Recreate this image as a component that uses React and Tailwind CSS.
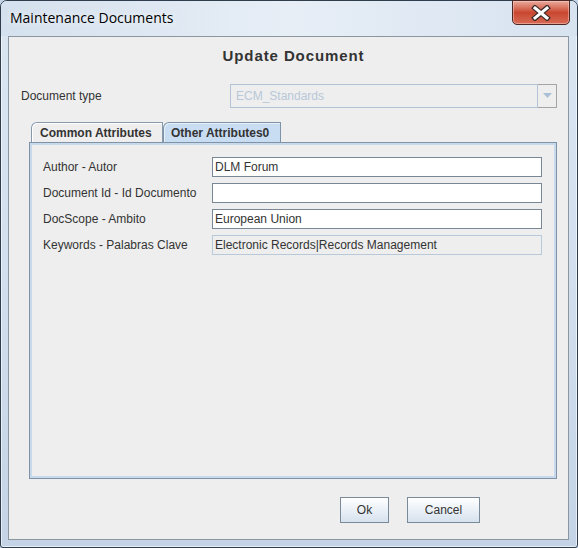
import React from 'react'

const ui = { fontFamily: '"Liberation Sans", Arial, sans-serif' }

function CloseButton() {
  return (
    <div className="-mt-px w-[58px] h-[25px] rounded-b-[5px] border border-[#4b2823] bg-linear-to-b from-[#e9a99d] via-[#c9462f] to-[#d76a55] flex items-center justify-center shadow-[inset_0_0_0_1px_rgba(255,220,210,0.45)]">
      <svg width="20" height="16" viewBox="0 0 20 16">
        <path d="M4 3 L16 13 M16 3 L4 13" stroke="#3b2a28" strokeWidth="5.5" strokeLinecap="square" />
        <path d="M4 3 L16 13 M16 3 L4 13" stroke="#ffffff" strokeWidth="3" strokeLinecap="square" />
      </svg>
    </div>
  )
}

function Field({ value, readOnly }) {
  return (
    <div
      className={
        readOnly
          ? 'h-[20px] border border-[#b8c9da] bg-[#eeeeee] px-[2px] flex items-center text-[12px] text-[#333333]'
          : 'h-[20px] border border-[#7a8896] bg-white px-[2px] flex items-center text-[12px] text-[#333333]'
      }
    >
      {value}
    </div>
  )
}

function Row({ label, value, readOnly }) {
  return (
    <div className="flex items-center h-[20px]">
      <div className="w-[169px] text-[12px] text-[#333333] pl-[13px] box-content">{label}</div>
      <div className="w-[330px]">
        <Field value={value} readOnly={readOnly} />
      </div>
    </div>
  )
}

export default function App() {
  return (
    <div className="w-[578px] h-[548px] bg-[#c5d5e7]" style={ui}>
      <div className="h-full flex flex-col border border-[#2f3d4c] rounded-t-[7px] rounded-b-[3px] bg-linear-to-b from-[#dbe6f2] via-[#d2dfee] to-[#c4d4e6] shadow-[inset_0_0_0_1px_rgba(255,255,255,0.6)]">
        {/* title bar */}
        <div className="h-[35px] flex items-start justify-between bg-linear-to-r from-[#d5e1ee] via-[#e7eef6] to-[#d8e3f0] rounded-t-[6px]">
          <div
            className="pl-[9px] pt-[8px] text-[14px] leading-[18px] text-black"
            style={{ fontFamily: '"Open Sans", "Noto Sans", sans-serif', textShadow: '0 0 6px rgba(255,255,255,0.9)' }}
          >
            Maintenance Documents
          </div>
          <div className="mr-[7px]">
            <CloseButton />
          </div>
        </div>

        {/* client area */}
        <div className="ml-[7px] mr-[8px] mb-[7px] flex-1 border border-[#8b96a1] bg-[#eeeeee] flex flex-col">
          <div className="mt-[10px] h-[18px] leading-[18px] pl-[10px] text-center text-[15px] font-bold text-[#333333] tracking-[0.9px]">
            Update Document
          </div>

          <div className="mt-[19px] h-[24px] flex items-center pl-[12px] pr-[11px]">
            <div className="text-[12px] text-[#333333]">Document type</div>
            <div className="ml-auto w-[327px] h-[24px] flex">
              <div className="flex-1 border border-[#b3c4d6] flex items-center pl-[5px] text-[12px] text-[#b8c8d8]">
                ECM_Standards
              </div>
              <div className="w-[19px] border border-l-0 border-[#a4a4a4] flex items-center justify-center">
                <svg width="9" height="6" viewBox="0 0 9 6">
                  <path d="M0 0 H9 L4.5 5 Z" fill="#aac0d6" />
                </svg>
              </div>
            </div>
          </div>

          {/* tabs */}
          <div className="mt-[14px] ml-[20px] mr-[11px] flex flex-col">
            <div className="h-[20px] flex items-end pl-[2px]">
              <div className="h-[20px] w-[132px] border border-b-0 border-[#8799ab] rounded-tl-[6px] bg-[#eeeeee] shadow-[inset_1px_1px_0_#ffffff] flex items-center pl-[8px] text-[12px] font-bold text-[#333333]">
                Common Attributes
              </div>
              <div className="h-[20px] w-[118px] border border-b-0 border-[#7f93a8] rounded-tl-[6px] bg-[#c8ddf2] shadow-[inset_1px_1px_0_#e6f0fa] flex items-center pl-[7px] text-[12px] font-bold text-[#333333]">
                Other Attributes0
              </div>
            </div>
            <div className="h-[337px] border border-[#7f93a8] shadow-[inset_0_0_0_2px_#c8d9eb] pt-[14px] flex flex-col gap-[6px]">
              <Row label="Author - Autor" value="DLM Forum" />
              <Row label="Document Id - Id Documento" value="" />
              <Row label="DocScope - Ambito" value="European Union" />
              <Row label="Keywords - Palabras Clave" value="Electronic Records|Records Management" readOnly />
            </div>
          </div>

          {/* buttons */}
          <div className="mt-[18px] h-[26px] flex justify-end gap-[18px] pr-[88px]">
            <button className="w-[49px] h-[26px] border border-[#7a8a99] bg-linear-to-b from-[#ffffff] to-[#d6e2ee] text-[12px] text-[#333333]">
              Ok
            </button>
            <button className="w-[73px] h-[26px] border border-[#7a8a99] bg-linear-to-b from-[#ffffff] to-[#d6e2ee] text-[12px] text-[#333333]">
              Cancel
            </button>
          </div>
        </div>
      </div>
    </div>
  )
}
